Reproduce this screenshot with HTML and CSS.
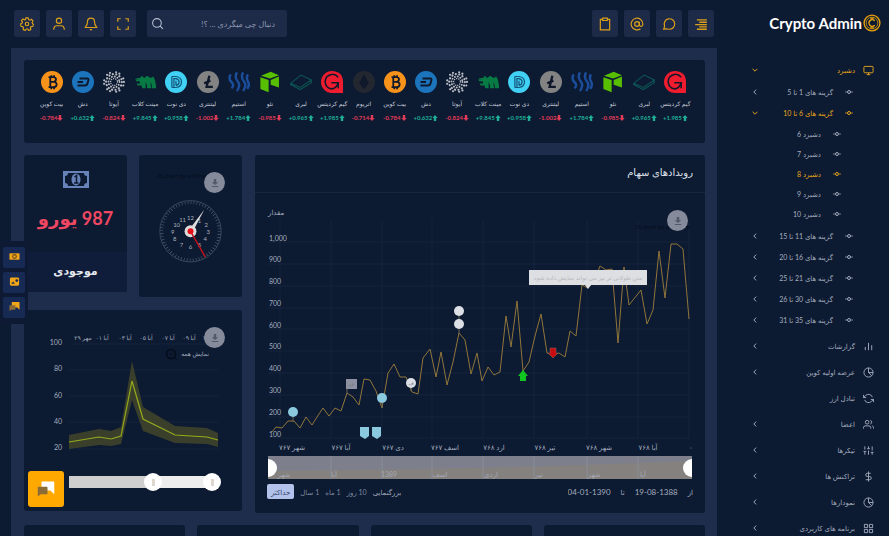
FILE: index.html
```html
<!DOCTYPE html>
<html lang="fa" dir="rtl">
<head>
<meta charset="utf-8">
<title>Crypto Admin</title>
<link rel="stylesheet" href="styles.css">
</head>
<body>
<svg class="sprite" aria-hidden="true">
  <symbol id="btc" viewBox="0 0 32 32"><circle cx="16" cy="16" r="16" fill="#f7931a"/><path d="M11 9h7c5 0 5 6 .5 6.700 6 .6 5.500 7.800-.5 7.800h-7M13.500 9v14.500M13.500 15.700h5M15 6v3M19 6v3M15 23.500v3M19 23.500v3" fill="none" stroke="#10182c" stroke-width="2.600"/></symbol>
  <symbol id="dash" viewBox="0 0 32 32"><circle cx="16" cy="16" r="16" fill="#1c75bc"/><path d="M11 11h11.500q2 0 1.400 2.200l-1.300 4.800q-.8 3-3.600 3H8M8 16h8" fill="none" stroke="#10182c" stroke-width="2.800"/></symbol>
  <symbol id="iota" viewBox="0 0 32 32"><g fill="none" stroke="#b9bcc2" stroke-linecap="round"><circle cx="16" cy="16" r="5" stroke-width="2" stroke-dasharray=".1 3.100"/><circle cx="16" cy="16" r="8" stroke-width="2.800" stroke-dasharray=".1 4.100"/><circle cx="16" cy="16" r="11.500" stroke-width="3.200" stroke-dasharray=".1 5.100"/><circle cx="16" cy="16" r="14.500" stroke-width="3" stroke-dasharray=".1 5 .1 9"/></g></symbol>
  <symbol id="mint" viewBox="0 0 32 32"><path d="M1 10h8l2-3 4 3 4-3 5 3 4-2q4 6 4 17h-6q0-6-2-9 0 4 1 9h-6q0-6-2-9v9h-5l-1-4H5l-1-3h5l-1-3H3l-1-3h5z" fill="#087a43"/></symbol>
  <symbol id="dinote" viewBox="0 0 32 32"><circle cx="16" cy="16" r="16" fill="#41d1f5"/><path d="M10 8h6q8 1 8 8t-8 8h-6M13 24V11h3q4.500 1 4.500 5t-4.500 5M10 8v16M16 14v7" fill="none" stroke="#14557c" stroke-width="1.800"/></symbol>
  <symbol id="ltc" viewBox="0 0 32 32"><circle cx="16" cy="16" r="16" fill="#838383"/><path d="M18 7l-4 16h9M10.500 18l9-4" fill="none" stroke="#10182c" stroke-width="3.400"/></symbol>
  <symbol id="steem" viewBox="0 0 32 32"><path d="M4 5q-4 6 1 11t0 9M13 2q-4 7 1 13t-1 14M22 2q-4 7 1 13t-1 14M29 5q-3 5 0 10t-1 11" fill="none" stroke="#1b4d9b" stroke-width="3.600"/></symbol>
  <symbol id="neo" viewBox="0 0 32 32"><path d="M3 7L17 1l12 5-13 5zM2 9l12 4v18L2 26zM17 13l12-5v16l-12-4z" fill="#58bf00"/></symbol>
  <symbol id="lbry" viewBox="0 0 32 32"><path d="M1 18l15-12 15 7v4L15 27 1 20zM1 18l14 6 16-11" fill="none" stroke="#0d5452" stroke-width="1.600"/></symbol>
  <symbol id="game" viewBox="0 0 32 32"><path d="M16 0q16 1 16 16v16H16a16 16 0 010-32z" fill="#ed1c2e"/><path d="M25 9q-4-5-10-4-9 2-9 11 1 9 9 10 7 0 10-9H15M25 17v8" fill="none" stroke="#10182c" stroke-width="2.200"/></symbol>
  <symbol id="eth" viewBox="0 0 32 32"><circle cx="16" cy="16" r="16" fill="#232730"/><path d="M16 5l7 12-7 10-7-10z" fill="#10182c"/></symbol>
  <symbol id="up" viewBox="0 0 10 10"><path d="M5 0l4.500 5H7v5H3V5H.5z" fill="currentColor"/></symbol>
  <symbol id="down" viewBox="0 0 10 10"><path d="M5 10l4.500-5H7V0H3v5H.5z" fill="currentColor"/></symbol>
  <symbol id="chev" viewBox="0 0 10 10"><path d="M7 1L3 5l4 4" fill="none" stroke="currentColor" stroke-width="1.600"/></symbol>
  <symbol id="chevd" viewBox="0 0 10 10"><path d="M1 3l4 4 4-4" fill="none" stroke="currentColor" stroke-width="1.600"/></symbol>
  <symbol id="node" viewBox="0 0 10 10"><path d="M1 5h2M7 5h2" stroke="currentColor" stroke-width=".7" fill="none"/><circle cx="5" cy="5" r="1.500" stroke="currentColor" fill="none"/></symbol>
  <symbol id="pie" viewBox="0 0 24 24"><circle cx="12" cy="12" r="10"/><path d="M12 2v10h10M12 12l7 7"/></symbol>
  <symbol id="dl" viewBox="0 0 10 10"><path d="M3.500 0h3v4H9L5 7.500 1 4h2.500zM1 8.700h8V10H1z" fill="currentColor" stroke="none"/></symbol>
  <symbol id="chat" viewBox="0 0 24 24"><path d="M6 2h16q1 0 1 1v16l-5-5H6z" fill="currentColor"/><path d="M1 9h12q1 0 1 1v8q0 1-1 1H5l-4 3z" class="chat-back"/></symbol>
</svg>
<div class="app">
  <aside class="sidebar">
    <a class="brand" href="#" dir="ltr"><span>Crypto Admin</span><svg viewBox="0 0 20 20" aria-hidden="true"><circle cx="10" cy="10" r="8.800"/><circle cx="10" cy="10" r="6.500" stroke-width=".8"/><path d="M13 7.500q-2-2-4.500-.8-2.500 1.300-1.700 4.300 1 3 4 2.700 1.500-.2 2.300-1.300M9 3.500v3M11 3.500v3M9 13.500v3M11 13.500v3"/></svg></a>
    <nav>
      <ul class="menu">
        <li><a class="top on" href="#"><svg viewBox="0 0 24 24"><rect x="2" y="3" width="20" height="14" rx="2"/><path d="M8 21h8M12 17v4"/></svg><span>دشبرد</span><svg class="chev"><use href="#chevd"/></svg></a>
          <ul class="sub">
            <li><a href="#"><svg><use href="#node"/></svg><span>گزینه های 1 تا 5</span><svg class="chev"><use href="#chev"/></svg></a></li>
            <li><a class="on" href="#"><svg><use href="#node"/></svg><span>گزینه های 6 تا 10</span><svg class="chev"><use href="#chevd"/></svg></a>
              <ul class="leaf">
                <li><a href="#"><svg><use href="#node"/></svg><span>دشبرد 6</span></a></li>
                <li><a href="#"><svg><use href="#node"/></svg><span>دشبرد 7</span></a></li>
                <li><a class="on" href="#"><svg><use href="#node"/></svg><span>دشبرد 8</span></a></li>
                <li><a href="#"><svg><use href="#node"/></svg><span>دشبرد 9</span></a></li>
                <li><a href="#"><svg><use href="#node"/></svg><span>دشبرد 10</span></a></li>
              </ul></li>
            <li><a href="#"><svg><use href="#node"/></svg><span>گزینه های 11 تا 15</span><svg class="chev"><use href="#chev"/></svg></a></li>
            <li><a href="#"><svg><use href="#node"/></svg><span>گزینه های 16 تا 20</span><svg class="chev"><use href="#chev"/></svg></a></li>
            <li><a href="#"><svg><use href="#node"/></svg><span>گزینه های 21 تا 25</span><svg class="chev"><use href="#chev"/></svg></a></li>
            <li><a href="#"><svg><use href="#node"/></svg><span>گزینه های 30 تا 26</span><svg class="chev"><use href="#chev"/></svg></a></li>
            <li><a href="#"><svg><use href="#node"/></svg><span>گزینه های 35 تا 31</span><svg class="chev"><use href="#chev"/></svg></a></li>
          </ul></li>
        <li><a class="top" href="#"><svg viewBox="0 0 24 24"><path d="M5 20v-7M12 20V4M19 20v-11"/></svg><span>گزارشات</span><svg class="chev"><use href="#chev"/></svg></a></li>
        <li><a class="top" href="#"><svg><use href="#pie"/></svg><span>عرضه اولیه کوین</span><svg class="chev"><use href="#chev"/></svg></a></li>
        <li><a class="top" href="#"><svg viewBox="0 0 24 24"><path d="M1 4v6h6M23 20v-6h-6M20.500 9A9 9 0 005.600 5.600L1 10M23 14l-4.600 4.400A9 9 0 013.500 15"/></svg><span>تبادل ارز</span></a></li>
        <li><a class="top" href="#"><svg viewBox="0 0 24 24"><path d="M17 21v-2a4 4 0 00-4-4H5a4 4 0 00-4 4v2M23 21v-2a4 4 0 00-3-3.900M16 3.100a4 4 0 010 7.800"/><circle cx="9" cy="7" r="4"/></svg><span>اعضا</span><svg class="chev"><use href="#chev"/></svg></a></li>
        <li><a class="top" href="#"><svg viewBox="0 0 24 24"><path d="M4 21v-7M4 10V3M12 21v-9M12 8V3M20 21v-5M20 12V3M1 14h6M9 8h6M17 16h6"/></svg><span>تیکرها</span><svg class="chev"><use href="#chev"/></svg></a></li>
        <li><a class="top" href="#"><svg viewBox="0 0 24 24"><path d="M12 1v22M17 5H9.500a3.500 3.500 0 000 7h5a3.500 3.500 0 010 7H6"/></svg><span>تراکنش ها</span><svg class="chev"><use href="#chev"/></svg></a></li>
        <li><a class="top" href="#"><svg><use href="#pie"/></svg><span>نمودارها</span><svg class="chev"><use href="#chev"/></svg></a></li>
        <li><a class="top" href="#"><svg viewBox="0 0 24 24"><path d="M3 3h7v7H3zM14 3h7v7h-7zM14 14h7v7h-7zM3 14h7v7H3z"/></svg><span>برنامه های کاربردی</span><svg class="chev"><use href="#chev"/></svg></a></li>
      </ul>
    </nav>
  </aside>

  <div class="page">
    <header class="bar">
      <div class="group">
        <button class="tool" aria-label="منو"><svg viewBox="0 0 24 24"><path d="M5 5h17M9 9h13M2 13h20M9 17h13M5 21h17" stroke-width="2.400"/></svg></button>
        <button class="tool" aria-label="گفتگو"><svg viewBox="0 0 24 24"><path d="M3 21l1.500-5.500A9 9 0 1112 21a9 9 0 01-4-1z"/></svg></button>
        <button class="tool" aria-label="ایمیل"><svg viewBox="0 0 24 24"><circle cx="12" cy="12" r="4"/><path d="M16 8v5a3 3 0 006 0v-1a10 10 0 10-4 8"/></svg></button>
        <button class="tool" aria-label="وظایف"><svg viewBox="0 0 24 24"><path d="M16 4h4v18H4V4h4M8 2h8v4H8z"/></svg></button>
      </div>
      <div class="group">
        <label class="search"><input type="text" aria-label="جستجو" placeholder="دنبال چی میگردی ... ؟!"><svg viewBox="0 0 24 24"><circle cx="11" cy="11" r="8"/><path d="M22 22l-5.500-5.500"/></svg></label>
        <button class="tool" aria-label="تمام صفحه"><svg viewBox="0 0 24 24"><path d="M8 3H3v5M21 8V3h-5M3 16v5h5M16 21h5v-5"/></svg></button>
        <button class="tool" aria-label="اعلان"><svg viewBox="0 0 24 24"><path d="M18 8a6 6 0 00-12 0c0 7-4 9-4 10h20c0-1-4-3-4-10M10 21.500h4"/></svg></button>
        <button class="tool" aria-label="کاربر"><svg viewBox="0 0 24 24"><path d="M21 22v-2q-1-5-5-5H8q-4 0-5 5v2"/><circle cx="12" cy="6.500" r="4.500"/></svg></button>
        <button class="tool" aria-label="تنظیمات"><svg viewBox="0 0 24 24"><circle cx="12" cy="12" r="3"/><path d="M10 1.500h4l.8 3 2.200 1 2.700-1.500 2.500 2.700L20.800 9.500l.7 2 1.500 1-1 3.500-3 .5-1.200 2 .7 3-3.500 1.500-2-2.500h-2L9 23l-3.500-1.500.5-3-1.200-2-3-.5-.8-4 2.500-1.500.7-2L2.500 6 5 3.500 8 5l1.500-.7z"/></svg></button>
      </div>
    </header>

    <main class="content">
      <section class="card ticker">
        <div class="coin"><svg><use href="#game"/></svg><b>گیم کردیتس</b><i class="up" dir="ltr">+1.985<svg><use href="#up"/></svg></i></div>
        <div class="coin"><svg><use href="#lbry"/></svg><b>لبری</b><i class="up" dir="ltr">+0.965<svg><use href="#up"/></svg></i></div>
        <div class="coin"><svg><use href="#neo"/></svg><b>نئو</b><i class="down" dir="ltr">-0.985<svg><use href="#down"/></svg></i></div>
        <div class="coin"><svg><use href="#steem"/></svg><b>استیم</b><i class="up" dir="ltr">+1.784<svg><use href="#up"/></svg></i></div>
        <div class="coin"><svg><use href="#ltc"/></svg><b>لیتنتری</b><i class="down" dir="ltr">-1.002<svg><use href="#down"/></svg></i></div>
        <div class="coin"><svg><use href="#dinote"/></svg><b>دی نوت</b><i class="up" dir="ltr">+0.958<svg><use href="#up"/></svg></i></div>
        <div class="coin"><svg><use href="#mint"/></svg><b>مینت کلاب</b><i class="up" dir="ltr">+9.845<svg><use href="#up"/></svg></i></div>
        <div class="coin"><svg><use href="#iota"/></svg><b>آیوتا</b><i class="down" dir="ltr">-0.824<svg><use href="#down"/></svg></i></div>
        <div class="coin"><svg><use href="#dash"/></svg><b>دش</b><i class="up" dir="ltr">+0.632<svg><use href="#up"/></svg></i></div>
        <div class="coin"><svg><use href="#btc"/></svg><b>بیت کوین</b><i class="down" dir="ltr">-0.784<svg><use href="#down"/></svg></i></div>
        <div class="coin"><svg><use href="#eth"/></svg><b>اتریوم</b><i class="down" dir="ltr">-0.714<svg><use href="#down"/></svg></i></div>
        <div class="coin"><svg><use href="#game"/></svg><b>گیم کردیتس</b><i class="up" dir="ltr">+1.985<svg><use href="#up"/></svg></i></div>
        <div class="coin"><svg><use href="#lbry"/></svg><b>لبری</b><i class="up" dir="ltr">+0.965<svg><use href="#up"/></svg></i></div>
        <div class="coin"><svg><use href="#neo"/></svg><b>نئو</b><i class="down" dir="ltr">-0.985<svg><use href="#down"/></svg></i></div>
        <div class="coin"><svg><use href="#steem"/></svg><b>استیم</b><i class="up" dir="ltr">+1.784<svg><use href="#up"/></svg></i></div>
        <div class="coin"><svg><use href="#ltc"/></svg><b>لیتنتری</b><i class="down" dir="ltr">-1.002<svg><use href="#down"/></svg></i></div>
        <div class="coin"><svg><use href="#dinote"/></svg><b>دی نوت</b><i class="up" dir="ltr">+0.958<svg><use href="#up"/></svg></i></div>
        <div class="coin"><svg><use href="#mint"/></svg><b>مینت کلاب</b><i class="up" dir="ltr">+9.845<svg><use href="#up"/></svg></i></div>
        <div class="coin"><svg><use href="#iota"/></svg><b>آیوتا</b><i class="down" dir="ltr">-0.824<svg><use href="#down"/></svg></i></div>
        <div class="coin"><svg><use href="#dash"/></svg><b>دش</b><i class="up" dir="ltr">+0.632<svg><use href="#up"/></svg></i></div>
        <div class="coin"><svg><use href="#btc"/></svg><b>بیت کوین</b><i class="down" dir="ltr">-0.784<svg><use href="#down"/></svg></i></div>
      </section>

      <div class="columns">
        <section class="card stock">
          <h2>رویدادهای سهام</h2>
          <div class="stock-body">
            <button class="download" aria-label="دانلود"><svg><use href="#dl"/></svg></button>
            <svg class="plot" viewBox="267 205 426 251" direction="ltr">
              <path class="grid" d="M268 242h421M268 264h421M268 286h421M268 308h421M268 329h421M268 351h421M268 373h421M268 395h421M268 417h421M268 438h421M280 221v217M331 221v217M382 221v217M432 221v217M483 221v217M534 221v217M587 221v217M638 221v217M689 221v217"/>
              <text class="ghost" x="663" y="229">JS chart by amCharts</text>
              <g class="axis"><text x="268" y="215">مقدار</text><text x="269" y="241">1,000</text><text x="269" y="262">900</text><text x="269" y="284">800</text><text x="269" y="306">700</text><text x="269" y="328">600</text><text x="269" y="349">500</text><text x="269" y="371">400</text><text x="269" y="393">300</text><text x="269" y="415">200</text><text x="269" y="437">100</text></g>
              <g class="axis mid"><text x="292" y="450">شهر ۷۶۷</text><text x="341" y="450">آبا ۷۶۷</text><text x="393" y="450">دی ۷۶۷</text><text x="445" y="450">اسف ۷۶۷</text><text x="494" y="450">ارد ۷۶۸</text><text x="545" y="450">تیر ۷۶۸</text><text x="599" y="450">شهر ۷۶۸</text><text x="648" y="450">آبا ۷۶۸</text><text x="691" y="450">۰</text></g>
              <path class="price" d="M272 432L276 427 282 428 288 421 294 421 300 428 306 417 312 425 317 417 323 408 329 416 335 408 341 411 347 393 353 397 359 405 364 379 370 380 376 391 382 408 388 373 394 364 400 377 406 377 412 392 418 394 423 358 430 349 436 377 441 352 447 385 453 362 459 333 465 340 471 374 477 353 482 381 488 367 494 375 500 372 506 316 511 347 517 301 523 371 529 362 535 336 541 314 547 353 553 355 559 353 565 357 570 331 576 336 582 285 588 288 594 282 600 266 606 270 612 269 618 343 624 267 629 305 641 290 647 324 653 310 659 251 665 298 671 244 677 244 683 249 689 319"/>
              <g class="stem"><path d="M293 413v9M347 388v6M459 311v23M382 398v10M411 383v8"/></g>
              <circle cx="293" cy="412" r="5" fill="#8bc9df"/><circle cx="382" cy="398" r="5" fill="#8bc9df"/><circle cx="411" cy="383" r="5" fill="#dcdfe6"/><circle cx="459" cy="311" r="5" fill="#dcdfe6"/><circle cx="459" cy="324" r="5" fill="#dcdfe6"/>
              <path d="M346 379h11v10h-11z" fill="#8c90a0"/><path d="M360 427h9v9l-4 3-5-3zM372 427h9v9l-4 3-5-3z" fill="#8bc9df"/>
              <g class="tiny"><text x="351" y="386">ف</text><text x="411" y="385">ف</text></g>
              <path d="M523 370l5 6h-2v5h-6v-5h-2z" fill="#11c520"/><path d="M553 358l5-5h-2v-5h-6v5h-2z" fill="#c80c12" stroke="#8e6a5c" stroke-width=".5"/>
              <path d="M529 270h118v15h-56l-3 4-3-4h-56z" fill="#dddfe3"/><text class="tip" x="588" y="280">متن طولانی تر نیز می تواند نمایش داده شود</text>
            </svg>
            <div class="navigator">
              <svg viewBox="268 456 424 23" preserveAspectRatio="none"><path d="M268 471q100-1 200-3l50-1 60-2 60-2 54-2v18H268z" fill="#84817f"/><path d="M331 456v23M382 456v23M432 456v23M483 456v23M534 456v23M587 456v23M638 456v23" stroke="#898d99"/><g class="navtext"><text x="284" y="477">شهر</text><text x="334" y="477">آبا</text><text x="389" y="477">1389</text><text x="440" y="477">اسف</text><text x="491" y="477">اردی</text><text x="539" y="477">تیر</text><text x="594" y="477">شهر</text><text x="643" y="477">آبا</text></g></svg>
              <input type="range" value="100" aria-label="شروع بازه"><input type="range" value="0" aria-label="پایان بازه">
            </div>
            <div class="period">
              <label>از <input type="text" value="19-08-1388"></label>
              <label>تا <input type="text" value="04-01-1390"></label>
              <div class="zoom"><span>بزرگنمایی</span><button>10 روز</button><button>1 ماه</button><button>1 سال</button><button class="max">حداکثر</button></div>
            </div>
          </div>
        </section>

        <div class="side">
          <section class="card clock">
            <button class="download" aria-label="دانلود"><svg><use href="#dl"/></svg></button>
            <svg viewBox="139 155 104 142" direction="ltr">
              <text class="ghost" x="185" y="178">JS chart by amCharts</text>
              <circle cx="191" cy="232" r="31" fill="none" stroke="#39475c"/><circle cx="191" cy="232" r="29" fill="none" stroke="#596579" stroke-width="3" stroke-dasharray=".6 2.437"/>
              <g class="hours"><text x="191" y="221">12</text><text x="200" y="224">1</text><text x="207" y="228">2</text><text x="209" y="235">3</text><text x="206" y="242">4</text><text x="200" y="248">5</text><text x="191" y="250">6</text><text x="182" y="248">7</text><text x="175" y="242">8</text><text x="173" y="235">9</text><text x="177" y="228">10</text><text x="183" y="223">11</text></g>
              <circle cx="191" cy="232" r="6" fill="#ddd"/><path d="M190 230l15-20-12 23z" fill="#ddd"/><path d="M191 232l15 26" stroke="#c4101c" stroke-width="1.500"/><circle cx="191" cy="232" r="3" fill="#e8101c"/>
            </svg>
          </section>
          <section class="card cash">
            <div class="amount"><svg viewBox="0 0 26 17"><path d="M0 0h26v17H0z" fill="#6783b9"/><path d="M5 2h16q0 3 3 3v7q-3 0-3 3H5q0-3-3-3V5q3 0 3-3z" fill="#0c1a32"/><ellipse cx="13" cy="8.500" rx="4.500" ry="6" fill="#6783b9"/><path d="M11.500 6l2-1.500V12M11 12h4.500" fill="none" stroke="#0c1a32" stroke-width="1.500"/></svg><strong>987 یورو</strong></div>
            <h3>موجودی</h3>
          </section>
          <section class="card band">
            <button class="download" aria-label="دانلود"><svg><use href="#dl"/></svg></button>
            <svg class="plot" viewBox="24 310 218 162" direction="ltr">
              <path class="grid" d="M69 344h149M69 370h149M69 396h149M69 422h149M69 449h149"/>
              <g class="axis end"><text x="62" y="345">100</text><text x="62" y="371">80</text><text x="62" y="398">60</text><text x="62" y="424">40</text><text x="62" y="450">20</text></g>
              <g class="axis mid small"><text x="83" y="340">مهر ۲۹</text><text x="102" y="340">آبا ۰۱</text><text x="125" y="340">آبا ۰۳</text><text x="146" y="340">آبا ۰۵</text><text x="168" y="340">آبا ۰۷</text><text x="189" y="340">آبا ۰۹</text><text x="209" y="340">آبا ۱۱</text><text x="195" y="356">نمایش همه</text></g>
              <circle cx="171" cy="354" r="4.500" fill="none" stroke="#050c19" stroke-width="1.500"/><path d="M169 354h4M174 357l3 3" stroke="#050c19"/>
              <path d="M69 435L99 429 111 431 121 427 132 361 143 407 175 426 207 428 218 433V447L207 444 175 443 143 431 132 400 121 444 111 446 99 445 69 449z" fill="#3a3f2b"/>
              <path d="M69 442L99 437 111 439 121 436 132 381 143 419 175 435 207 437 218 440" fill="none" stroke="#94aa1d" stroke-width="1.200"/>
            </svg>
            <div class="scroll"><input type="range" value="100" aria-label="پایان"><input type="range" value="59" aria-label="شروع"></div>
          </section>
        </div>
      </div>
      <div class="more"><section class="card"></section><section class="card"></section><section class="card"></section><section class="card"></section></div>
    </main>
  </div>
</div>
<div class="dock">
  <button aria-label="پرداخت"><svg viewBox="0 0 24 24"><path d="M1 5h22v14H1z" fill="currentColor"/><circle cx="12" cy="12" r="4" fill="currentColor" stroke="#6d4b20" stroke-width="2.500"/></svg></button>
  <button aria-label="گالری"><svg viewBox="0 0 24 24"><rect x="2" y="3" width="20" height="18" rx="3" fill="currentColor"/><path d="M5 17l4-5 4 5z" fill="#1a2a4e"/><circle cx="17" cy="10" r="3" fill="#1a2a4e"/></svg></button>
  <button aria-label="پیام"><svg><use href="#chat"/></svg></button>
</div>
<button class="fab" aria-label="چت"><svg><use href="#chat"/></svg></button>
</body>
</html>
```
FILE: styles.css
```css
* { box-sizing: border-box; }
html { background: #fff; overflow: hidden; }
body {
  margin: 0 1px 1px 0;
  height: calc(100vh - 1px);
  overflow: hidden;
  background: #0c1a32;
  color: #a5aebf;
  font: 8px/12px Lato, "DejaVu Sans", sans-serif;
}
button, input { font: inherit; color: inherit; border: 0; margin: 0; padding: 0; background: none; }
a { color: inherit; text-decoration: none; }
ul { list-style: none; margin: 0; padding: 0; }
h2, h3 { margin: 0; }
svg { display: block; }
.sprite { position: absolute; width: 0; height: 0; }
.app { display: flex; height: 100%; overflow: hidden; }

.sidebar { flex: 0 0 172px; font-size: 7px; }
.brand { display: flex; justify-content: flex-end; align-items: center; gap: 1px; height: 46px; padding-right: 8px; color: #fff; font-size: 15px; font-weight: 700; white-space: nowrap; }
.brand svg { width: 18px; height: 18px; fill: none; stroke: #e9a20d; stroke-width: 1.5; }
.menu { padding-top: 11px; }
.menu a { display: flex; align-items: center; height: 21px; padding: 0 35px; white-space: nowrap; }
.menu a svg { width: 10px; height: 10px; margin-left: 11px; fill: none; stroke: none; }
.menu a .chev { width: 6px; height: 6px; margin: 0 auto 0 0; }
.menu .top { height: 26px; padding-right: 15px; }
.menu .top > svg:first-child { width: 11px; height: 11px; margin-left: 8px; stroke: currentColor; stroke-width: 2; }
.menu a.on { color: #eaa91a; }
.leaf { padding: 1px 0; }
.leaf a { height: 20px; padding-right: 47px; }
.sub { margin-top: -2px; padding-bottom: 3px; }

.page { flex: 1; min-width: 0; }
.bar { display: flex; justify-content: space-between; height: 48px; padding: 10px 3px 11px 14px; }
.group { display: flex; gap: 6px; }
.tool { display: grid; place-items: center; width: 26px; height: 27px; border-radius: 2px; background: #1d2a48; color: #dda019; }
.tool svg { width: 14px; height: 14px; fill: none; stroke: currentColor; stroke-width: 2; }
.search { display: flex; align-items: center; width: 140px; height: 27px; margin-left: 5px; padding: 0 12px 0 4px; border-radius: 2px; background: #1d2a48; }
.search input { flex: 1; min-width: 0; font-size: 8px; outline: 0; }
.search input::placeholder { color: #8d98b0; opacity: 1; }
.search svg { width: 13px; height: 13px; fill: none; stroke: #b5bfd2; stroke-width: 2; }

.content { display: flex; flex-direction: column; gap: 12px; margin-left: 11px; padding: 12px 12px 12px 13px; background: #1f2d4c; }
.card { border-radius: 3px; background: #0c1a32; }
.ticker { display: grid; grid-template-columns: repeat(21, minmax(0, 1fr)); height: 83px; padding: 11px 14px 0 12px; }
.coin { display: flex; flex-direction: column; align-items: center; white-space: nowrap; }
.coin > svg { width: 22px; height: 22px; }
.coin b { margin-top: 5px; font-size: 6px; font-weight: 400; color: #c4cad7; }
.coin i { display: flex; align-items: center; margin-top: 2px; font: 700 6px/12px Lato, sans-serif; }
.coin i svg { width: 6px; height: 6px; }
.up { color: #1fae98; }
.down { color: #e13b58; }

.columns { display: grid; grid-template-columns: minmax(0, 450fr) minmax(0, 218fr); gap: 13px; }
.stock { min-height: 358px; }
.stock h2 { height: 38px; padding-right: 12px; border-bottom: 1px solid #172640; color: #dce1eb; font-size: 10px; font-weight: 400; line-height: 34px; }
.stock-body { position: relative; padding: 12px 12px 0; }
.plot { width: 100%; height: auto; }
.grid { fill: none; stroke: #15243c; }
.axis { fill: #a5aebf; font-size: 7px; }
.small { font-size: 6px; }
.mid, .tiny, .tip, .hours { text-anchor: middle; }
.end { text-anchor: end; }
.axis text { direction: ltr; }
.price { fill: none; stroke: #91763a; }
.stem { stroke: #6d6654; }
.tiny { fill: #70737d; font-size: 5px; }
.tip { fill: #b7b9be; font-size: 6px; direction: rtl; }
.download { position: absolute; z-index: 1; top: 17px; right: 17px; display: grid; place-items: center; width: 21px; height: 21px; border-radius: 50%; background: #858b9a; color: #505869; }
.download svg { width: 8px; height: 8px; }
.navigator { position: relative; overflow: hidden; height: 23px; margin: 0 1px; background: #7d808c; }
.navigator svg { width: 100%; height: 23px; }
.navtext { fill: #a5a8b2; font-size: 7px; text-anchor: middle; }
input[type="range"] { position: absolute; top: 50%; left: -9px; width: calc(100% + 18px); height: 18px; margin-top: -9px; appearance: none; pointer-events: none; }
input[type="range"]::-webkit-slider-thumb { appearance: none; width: 18px; height: 18px; border-radius: 50%; background: linear-gradient(#ddd7d0, #ddd7d0) center / 3px 7px no-repeat #fff; pointer-events: auto; }
.navigator input[type="range"]::-webkit-slider-thumb { background: #fff; }
.period { display: flex; align-items: center; margin-top: 5px; font-size: 7px; white-space: nowrap; }
.period label { display: flex; align-items: center; gap: 8px; margin-left: 10px; }
.period input { width: 45px; font-size: 8px; direction: ltr; }
.zoom { display: flex; align-items: center; gap: 6px; margin-right: auto; }
.zoom button { color: #7e899f; }
.zoom .max { height: 15px; padding: 0 4px; border-radius: 2px; background: #b3c2ea; color: #34436b; }

.side { display: grid; grid-template-columns: repeat(2, minmax(0, 1fr)); gap: 13px 12px; align-items: start; align-content: start; }
.clock, .band { position: relative; }
.clock { min-height: 142px; }
.clock > svg { width: 100%; }
.ghost { fill: #060d1a; font-size: 6px; text-anchor: middle; }
.hours { fill: #aab2bf; font-size: 6px; }
.cash { min-height: 137px; text-align: center; }
.amount { display: flex; flex-direction: column; align-items: center; height: 97px; padding-top: 16px; }
.amount svg { width: 26px; height: 17px; }
.amount strong { margin-top: 16px; color: #f04762; font-size: 18px; line-height: 28px; white-space: nowrap; }
.cash h3 { height: 40px; border-radius: 0 0 3px 3px; background: #0f1d3b; color: #e5e8ef; font-size: 11px; line-height: 38px; }
.band { grid-column: 1 / -1; height: 201px; }
.scroll { position: relative; height: 12px; margin: 4px 30px 0 45px; background: linear-gradient(90deg, #cfcfcf 59%, #ededed 59%); }
.scroll input { direction: ltr; }
.more { display: grid; grid-template-columns: repeat(4, 1fr); gap: 12px; }
.more .card { min-height: 100px; }

.dock { position: fixed; left: 0; top: 241px; display: grid; gap: 4px; padding: 6px 3px; background: #0e1a33; }
.dock button { display: grid; place-items: center; width: 22px; height: 21px; padding-bottom: 3px; border-radius: 2px; background: #162a53; color: #f0a51a; }
.dock svg { width: 11px; height: 11px; }
.chat-back { fill: #8c6c36; }
.fab { position: fixed; left: 28px; top: 471px; display: grid; place-items: center; width: 36px; height: 36px; border-radius: 3px; background: #ffa800; color: #fff; }
.fab svg { width: 18px; height: 18px; }
.fab .chat-back { fill: #ffd58a; }
```
